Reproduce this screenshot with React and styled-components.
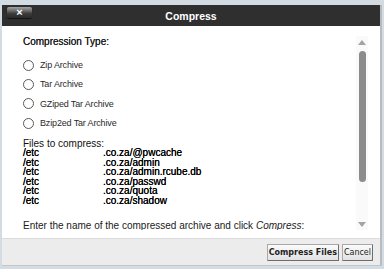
import React from "react";
import styled, { createGlobalStyle } from "styled-components";

const GlobalStyle = createGlobalStyle`
  html, body {
    margin: 0;
    padding: 0;
    background: #d4dce3;
    font-family: "Liberation Sans", Arial, sans-serif;
  }
`;

const files = [
  ["/etc", ".co.za/@pwcache"],
  ["/etc", ".co.za/admin"],
  ["/etc", ".co.za/admin.rcube.db"],
  ["/etc", ".co.za/passwd"],
  ["/etc", ".co.za/quota"],
  ["/etc", ".co.za/shadow"],
];

const types = ["Zip Archive", "Tar Archive", "GZiped Tar Archive", "Bzip2ed Tar Archive"];

function Compress() {
  return (
    <Dialog>
      <TitleBar>
        <CloseButton>×</CloseButton>
        <Title>Compress</Title>
        <span />
      </TitleBar>
      <Body>
        <Content>
          <Heading>Compression Type:</Heading>
          <RadioList>
            {types.map((t) => (
              <RadioRow key={t}>
                <Radio />
                <RadioLabel>{t}</RadioLabel>
              </RadioRow>
            ))}
          </RadioList>
          <FilesHeading>Files to compress:</FilesHeading>
          <FileTable>
            {files.map(([dir, name], i) => (
              <FileRow key={i}>
                <span>{dir}</span>
                <span>{name}</span>
              </FileRow>
            ))}
          </FileTable>
          <Hint>
            Enter the name of the compressed archive and click <em>Compress</em>:
          </Hint>
        </Content>
        <ScrollBar>
          <Arrow>
            <svg width="8" height="5" viewBox="0 0 8 5">
              <path d="M0 5 L4 0 L8 5 Z" fill="#a3a3a3" />
            </svg>
          </Arrow>
          <Thumb />
          <Spacer />
          <Arrow>
            <svg width="8" height="5" viewBox="0 0 8 5">
              <path d="M0 0 L4 5 L8 0 Z" fill="#a3a3a3" />
            </svg>
          </Arrow>
        </ScrollBar>
      </Body>
      <Footer>
        <Button $bold>Compress Files</Button>
        <Button>Cancel</Button>
      </Footer>
    </Dialog>
  );
}

const Dialog = styled.div`
  width: 378px;
  margin: 5px 0 0 2px;
  border-right: 2px solid #b9bcbf;
  border-bottom: 1px solid #c3c6c9;
  background: #fff;
`;

const TitleBar = styled.div`
  height: 21px;
  background: #2f2f2f;
  display: grid;
  grid-template-columns: 1fr auto 1fr;
  align-items: center;
  padding: 0 5px;
`;

const CloseButton = styled.div`
  justify-self: start;
  width: 25px;
  height: 11px;
  margin-top: -6px;
  border-radius: 2px;
  background: linear-gradient(#a5a5a5 0%, #6a6a6a 35%, #3b3b3b 60%, #2a2a2a 100%);
  box-shadow: 0 1px 1px rgba(0, 0, 0, 0.6);
  color: #fff;
  font-weight: bold;
  font-size: 11px;
  line-height: 11px;
  text-align: center;
`;

const Title = styled.div`
  color: #fff;
  font-weight: bold;
  font-size: 10.5px;
`;

const Body = styled.div`
  height: 212px;
  box-sizing: border-box;
  padding: 10px 12px 8px 11px;
  display: flex;
`;

const Content = styled.div`
  flex: 1;
  overflow: hidden;
  padding-left: 10px;
  color: #222;
`;

const Heading = styled.div`
  font-size: 10px;
  line-height: 12px;
  color: #222;
  text-shadow: 0 0 0.3px #222;
`;

const RadioList = styled.div`
  margin-top: 7.5px;
`;

const RadioRow = styled.div`
  height: 19.3px;
  display: flex;
  align-items: center;
  gap: 6px;
`;

const Radio = styled.span`
  width: 9px;
  height: 9px;
  border: 1px solid #5a5a5a;
  border-radius: 50%;
  background: #fff;
`;

const RadioLabel = styled.span`
  font-size: 9px;
  letter-spacing: -0.15px;
  color: #2a2a2a;
`;

const FilesHeading = styled.div`
  margin-top: 6px;
  font-size: 10px;
  line-height: 9.5px;
  color: #111;
`;

const FileTable = styled.div`
  font-size: 10px;
  line-height: 9.5px;
  color: #000;
  text-shadow: 0 0 0.3px #000;
`;

const FileRow = styled.div`
  display: grid;
  grid-template-columns: 80px 1fr;
  white-space: nowrap;
`;

const Hint = styled.div`
  margin-top: 15px;
  font-size: 10px;
  line-height: 12px;
  color: #1a1a1a;
  white-space: nowrap;
`;

const ScrollBar = styled.div`
  width: 12px;
  background: #fafafa;
  display: flex;
  flex-direction: column;
  align-items: center;
`;

const Arrow = styled.div`
  height: 12px;
  display: flex;
  align-items: center;
  justify-content: center;
`;

const Thumb = styled.div`
  width: 7px;
  height: 131px;
  margin-top: 3px;
  border-radius: 4px;
  background: #8c8c8c;
`;

const Spacer = styled.div`
  flex: 1;
`;

const Footer = styled.div`
  height: 27px;
  box-sizing: border-box;
  background: #ececec;
  border-top: 1px solid #dcdcdc;
  display: flex;
  justify-content: flex-end;
  align-items: center;
  gap: 3px;
  padding-right: 7px;
`;

const Button = styled.button`
  height: 17px;
  padding: 0 1px;
  font-family: "DejaVu Sans", Verdana, sans-serif;
  font-size: 8px;
  font-weight: ${(p) => (p.$bold ? "bold" : "normal")};
  color: #222;
  background: linear-gradient(#fbfbfb, #e2e2e2);
  border: 1px solid #a8a8a8;
  border-right-color: #6e6e6e;
  border-bottom-color: #6e6e6e;
  border-radius: 1px;
`;

export default function App() {
  return (
    <>
      <GlobalStyle />
      <Compress />
    </>
  );
}
